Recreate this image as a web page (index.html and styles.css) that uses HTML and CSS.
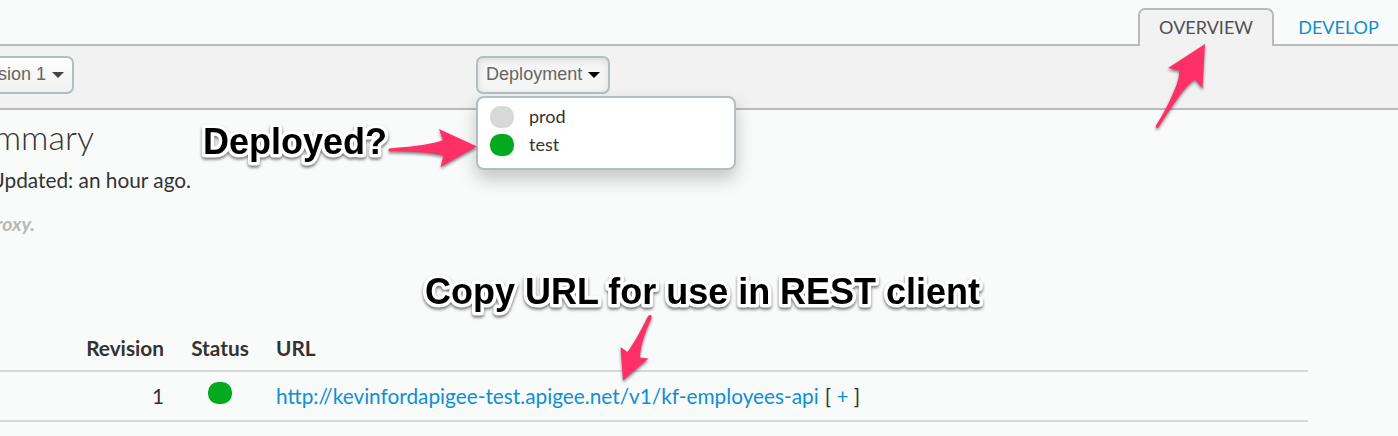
FILE: index.html
```html
<!DOCTYPE html>
<html lang="en">
<head>
<meta charset="utf-8">
<title>API Proxy Overview</title>
<link rel="stylesheet" href="styles.css">
</head>
<body>
<nav class="tabs">
  <a class="tab active"><span class="tab-label overview">OVERVIEW</span></a>
  <a class="tab"><span class="tab-label develop">DEVELOP</span></a>
</nav>
<div class="toolbar">
  <div class="revision-slot"><button class="btn revision"><span>Revision 1</span><i class="caret"></i></button></div>
  <div class="dropdown">
    <button class="btn open"><span class="deployment">Deployment</span><i class="caret"></i></button>
    <ul class="menu">
      <li><i class="dot off"></i><span>prod</span></li>
      <li><i class="dot"></i><span>test</span></li>
    </ul>
  </div>
</div>
<main>
  <h1 class="clip title"><span>Summary</span></h1>
  <p class="clip updated"><span>Updated: an hour ago.</span></p>
  <p class="clip description"><span>proxy.</span></p>
  <div class="table">
    <div class="row head"><b class="rev">Revision</b><b class="status">Status</b><b class="url"><span class="url-head">URL</span></b></div>
    <div class="row body"><span class="rev">1</span><span class="status"><i class="dot"></i></span><span class="url"><a class="link">http://kevinfordapigee-test.apigee.net/v1/kf-employees-api</a><span class="expand">[ <a>+</a> ]</span></span></div>
  </div>
</main>
<svg class="notes" width="1398" height="436" viewBox="0 0 1398 436">
  <g class="note-text">
    <text x="203" y="154" textLength="184" lengthAdjust="spacingAndGlyphs">Deployed?</text>
    <text x="425" y="304" textLength="555" lengthAdjust="spacingAndGlyphs">Copy URL for use in REST client</text>
  </g>
  <g class="arrow">
    <path d="M389 148.500Q388 150 389 151.500Q423 151 443.500 155.500L440.500 167L477 146.500L439 129L443 140Q432 145 389 148.500Z"/>
    <path d="M650.500 315Q648 315 647 318Q638 337 627.500 352L620.500 347L623 380.500L648.500 358.500L640 357.500Q640 344 651.500 318Q652 315 650.500 315Z"/>
    <path d="M1156 125.500Q1155 128 1158 128Q1172 106 1180 95Q1188 84 1195 79.500L1202.500 88.500L1205 44L1168 68L1179 70.500Q1180 78 1174 91Q1167 108 1156 125.500Z"/>
  </g>
</svg>
</body>
</html>
```

FILE: styles.css
```css
* { box-sizing: border-box; }
body { margin: 0; height: 436px; overflow: hidden; position: relative; background: #f9fbfa; color: #333; font: 20.8px/28px Lato, sans-serif; }
ul, h1, p { margin: 0; padding: 0; list-style: none; }
i { display: block; flex: none; }
.tabs { height: 46px; padding: 8px 0 0 1138px; display: flex; border-bottom: 2px solid #b9bbba; }
.tab { height: 36px; width: 136px; flex: none; padding-top: 6px; display: flex; justify-content: center; color: #0e8fd3; font-size: 18px; line-height: 26px; }
.tab.active { height: 38px; border: 2px solid #b9bbba; border-bottom: 0; border-radius: 7px 7px 0 0; background: #f2f2f2; color: #505050; padding-top: 4px; }
.tab:not(.active) { width: 129px; }
.tab-label { white-space: nowrap; }
.toolbar { height: 64px; padding-top: 10px; background: #f2f2f2; border-bottom: 2px solid #b9bbba; display: flex; }
.revision-slot { width: 476px; }
.btn { display: flex; align-items: center; height: 38px; border: 2px solid #b3bec3; border-radius: 7px; padding: 0 8px; font: 18px "Liberation Sans", sans-serif; color: #666; background: linear-gradient(#fff, #f0f0f0); white-space: nowrap; }
.btn span { padding-bottom: 2px; }
.revision { width: 120px; margin-left: -46px; justify-content: flex-end; }
.caret { width: 0; height: 0; border: 6px solid transparent; border-top-color: #444; border-bottom: 0; margin-left: 6px; }
.open { width: 134px; background: #f5f5f5; box-shadow: inset 0 2px 7px #0000001c; }
.open .caret { border-top-color: #000; margin-left: 6px; }
.deployment { letter-spacing: 0.03px; }
.dropdown { position: relative; }
.menu { position: absolute; left: 0; top: 40px; width: 260px; height: 74px; padding: 5px 12px; background: #fff; border: 2px solid #b3bec3; border-radius: 8px; box-shadow: 0 9px 18px #00000038; font-size: 18px; color: #333; }
.menu li { display: flex; align-items: center; gap: 15px; height: 28px; }
.menu span { padding-bottom: 2px; }
.dot { width: 24px; height: 22px; border-radius: 10px; background: #04aa1e; }
.dot.off { background: #d8d8d8; }
.clip { display: flex; justify-content: flex-end; white-space: nowrap; }
.title { width: 94px; height: 56px; padding-top: 6px; font-size: 34px; line-height: 42px; font-weight: 300; }
.updated { width: 191px; height: 44px; }
.description { width: 35px; height: 44px; font-style: italic; color: #b8b8b8; font-weight: 700; font-size: 19.5px; }
.table { width: 1308px; margin-top: 72px; }
.row { display: grid; grid-template-columns: 164px 112px 1fr; }
.head { height: 46px; padding-top: 8px; border-bottom: 2px solid #d7d9d8; }
.body { height: 50px; border-bottom: 2px solid #d7d9d8; padding-top: 10px; }
.rev { text-align: right; }
.status { display: flex; justify-content: center; }
.url { white-space: nowrap; display: flex; gap: 6px; }
a { color: #0e8fd3; }
.tab.active { color: #505050; }
.notes { position: absolute; inset: 0; pointer-events: none; }
.note-text { font: 700 36px "Liberation Sans", sans-serif; fill: #000; stroke: #fff; stroke-width: 7px; stroke-linejoin: round; paint-order: stroke; filter: drop-shadow(0 2px 1.5px #0008); }
.arrow { fill: #ff3068; filter: drop-shadow(0 2px 1.5px #0007); }
```
